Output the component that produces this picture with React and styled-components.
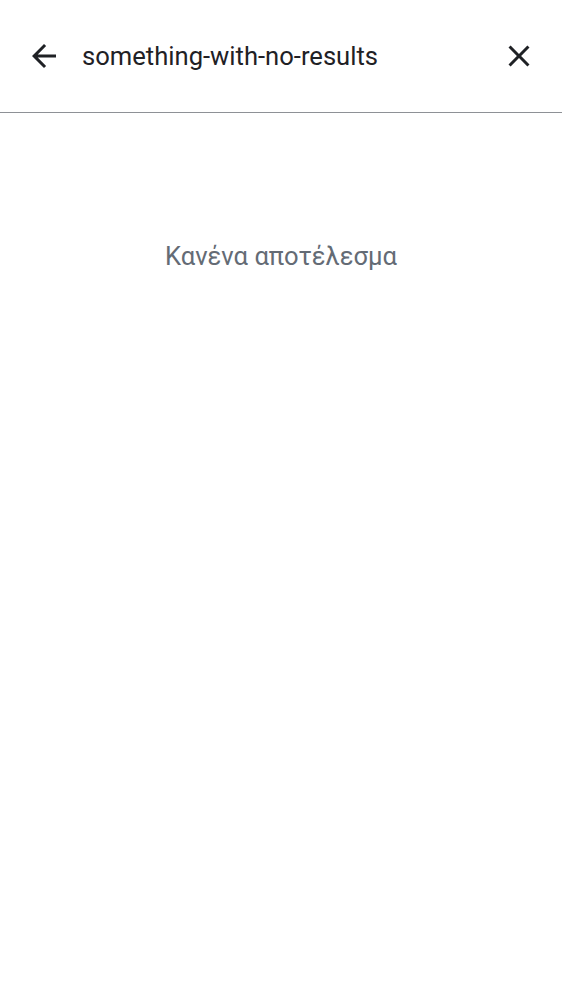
import styled, { createGlobalStyle } from 'styled-components'

const GlobalStyle = createGlobalStyle`
    html, body {
        margin: 0;
        padding: 0;
        background: #ffffff;
    }
    body {
        font-family: Roboto, 'Noto Sans', sans-serif;
    }
`

const BackIcon = () => (
    <svg xmlns='http://www.w3.org/2000/svg' width='36' height='36' viewBox='0 0 24 24'>
        <path fill='currentColor' d='M20 11H7.83l5.59-5.59L12 4l-8 8 8 8 1.41-1.41L7.83 13H20v-2z' />
    </svg>
)

const CloseIcon = () => (
    <svg xmlns='http://www.w3.org/2000/svg' width='36' height='36' viewBox='0 0 24 24'>
        <path
            fill='currentColor'
            d='M19 6.41 17.59 5 12 10.59 6.41 5 5 6.41 10.59 12 5 17.59 6.41 19 12 13.41 17.59 19 19 17.59 13.41 12z'
        />
    </svg>
)

const App = () => {
    return (
        <Page>
            <GlobalStyle />
            <SearchBar>
                <IconButton aria-label='back'>
                    <BackIcon />
                </IconButton>
                <SearchInput defaultValue='something-with-no-results' />
                <IconButton aria-label='clear'>
                    <CloseIcon />
                </IconButton>
            </SearchBar>
            <EmptyState>Κανένα αποτέλεσμα</EmptyState>
        </Page>
    )
}

const Page = styled.div`
    width: 100%;
    min-height: 1000px;
    background: #ffffff;
`

const SearchBar = styled.div`
    display: flex;
    align-items: center;
    height: 113px;
    padding: 0 25px 1px 26px;
    box-sizing: border-box;
    border-bottom: 1px solid #8e9196;
    gap: 20px;
`

const IconButton = styled.button`
    display: flex;
    align-items: center;
    justify-content: center;
    width: 36px;
    height: 36px;
    padding: 0;
    border: none;
    background: transparent;
    color: #1f2125;
    flex-shrink: 0;
    cursor: pointer;
`

const SearchInput = styled.input`
    flex: 1;
    min-width: 0;
    border: none;
    outline: none;
    background: transparent;
    padding: 0;
    font-family: Roboto, sans-serif;
    font-size: 25.6px;
    color: #1f2125;
`

const EmptyState = styled.p`
    margin: 128px 0 0;
    text-align: center;
    font-family: Roboto, sans-serif;
    font-size: 25.6px;
    line-height: 30px;
    color: #646b75;
`

export default App
